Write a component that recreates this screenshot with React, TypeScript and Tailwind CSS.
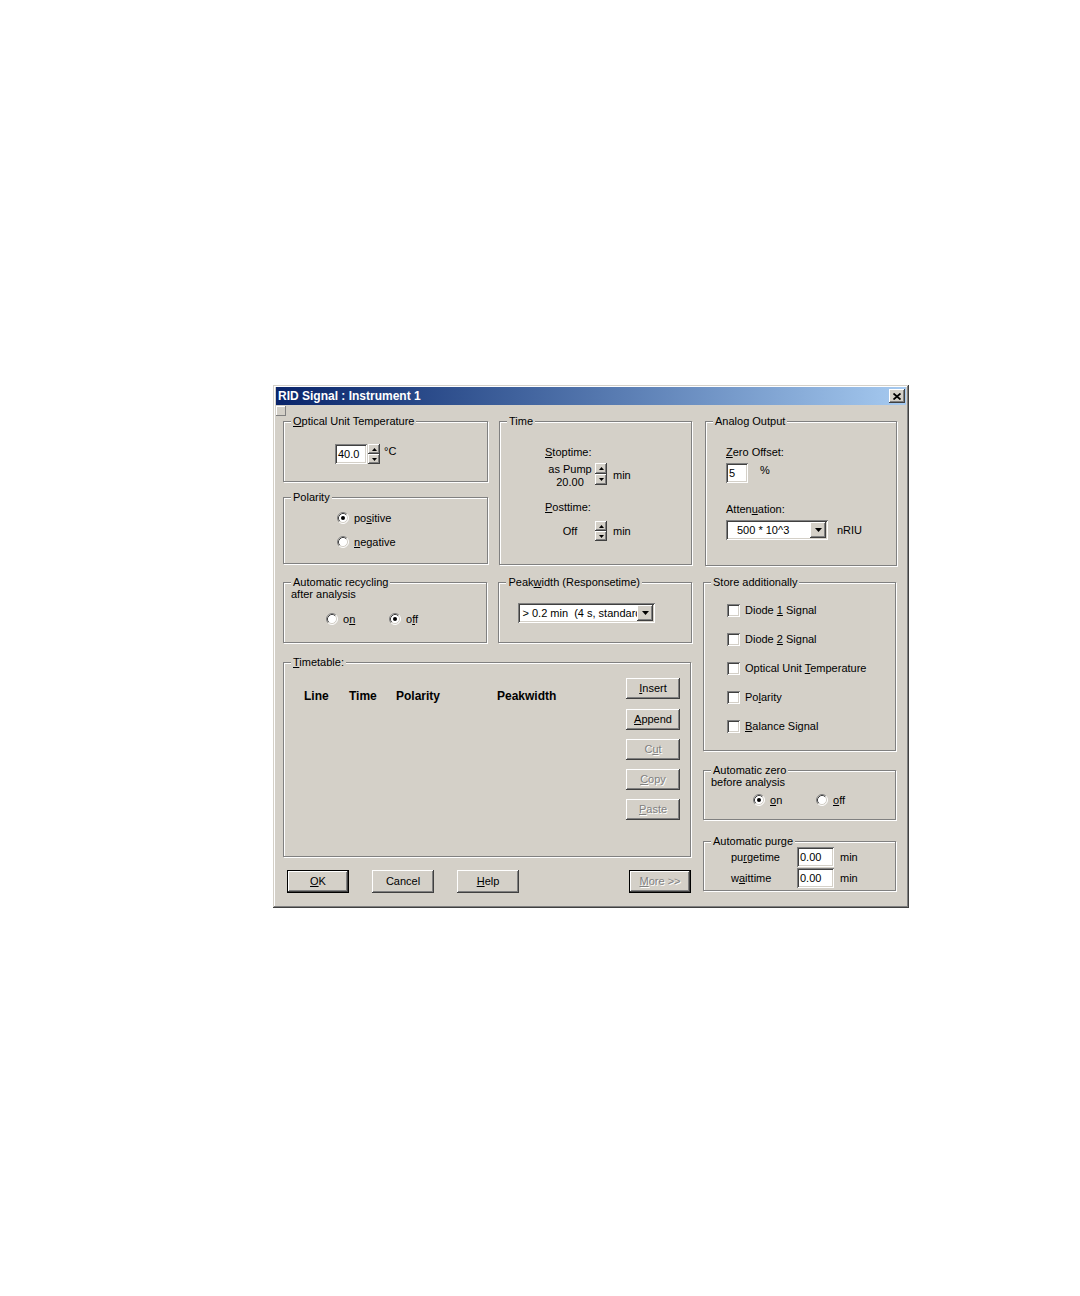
import React from 'react';

const FACE = 'bg-[#d4d0c8]';
const raised =
  'shadow-[inset_-1px_-1px_0_#404040,inset_1px_1px_0_#ffffff,inset_-2px_-2px_0_#808080,inset_2px_2px_0_#d4d0c8]';
const sunken =
  'shadow-[inset_1px_1px_0_#808080,inset_-1px_-1px_0_#ffffff,inset_2px_2px_0_#404040,inset_-2px_-2px_0_#d4d0c8]';
const disabledText = 'text-[#808080] [text-shadow:1px_1px_0_#ffffff]';

function Group({
  label,
  className = '',
  children,
}: {
  label: React.ReactNode;
  className?: string;
  children?: React.ReactNode;
}) {
  return (
    <fieldset className={`border border-[#808080] shadow-[1px_1px_0_#ffffff,inset_1px_1px_0_#ffffff] ${className}`}>
      <legend className={`ml-[7px] px-[2px] leading-[14px] ${FACE}`}>{label}</legend>
      {children}
    </fieldset>
  );
}

function Radio({ checked = false }: { checked?: boolean }) {
  return (
    <svg width="12" height="12" viewBox="0 0 12 12" className="shrink-0">
      <circle cx="6" cy="6" r="5" fill="#ffffff" />
      <path d="M2.11 9.89 A5.5 5.5 0 0 1 9.89 2.11" fill="none" stroke="#808080" strokeWidth="1" />
      <path d="M9.89 2.11 A5.5 5.5 0 0 1 2.11 9.89" fill="none" stroke="#ffffff" strokeWidth="1" />
      <path d="M2.82 9.18 A4.5 4.5 0 0 1 9.18 2.82" fill="none" stroke="#404040" strokeWidth="1" />
      <path d="M9.18 2.82 A4.5 4.5 0 0 1 2.82 9.18" fill="none" stroke="#d4d0c8" strokeWidth="1" />
      {checked && <circle cx="6" cy="6" r="2" fill="#000000" />}
    </svg>
  );
}

function RadioItem({ checked, children, className = '' }: { checked?: boolean; children: React.ReactNode; className?: string }) {
  return (
    <div className={`flex items-center h-[14px] gap-[5px] ${className}`}>
      <Radio checked={checked} />
      <span className="leading-[14px]">{children}</span>
    </div>
  );
}

function Check({ children }: { children: React.ReactNode }) {
  return (
    <div className="flex items-center h-[14px]">
      <div className={`w-[13px] h-[13px] bg-white ${sunken}`} />
      <span className="ml-[5px] leading-[14px]">{children}</span>
    </div>
  );
}

function Arrow({ dir }: { dir: 'up' | 'down' }) {
  return (
    <svg width="5" height="3" viewBox="0 0 5 3">
      {dir === 'up' ? <path d="M2.5 0 L5 3 L0 3 Z" fill="#000" /> : <path d="M0 0 L5 0 L2.5 3 Z" fill="#000" />}
    </svg>
  );
}

function Spin({ half, className = '' }: { half: number; className?: string }) {
  return (
    <div className={`flex flex-col w-[12px] ${className}`}>
      <div className={`flex items-center justify-center ${FACE} ${raised}`} style={{ height: half }}>
        <Arrow dir="up" />
      </div>
      <div className={`flex items-center justify-center ${FACE} ${raised}`} style={{ height: half }}>
        <Arrow dir="down" />
      </div>
    </div>
  );
}

function DropButton() {
  return (
    <div className={`w-[16px] h-[16px] shrink-0 flex items-center justify-center ${FACE} ${raised}`}>
      <svg width="7" height="4" viewBox="0 0 7 4">
        <path d="M0 0 L7 0 L3.5 4 Z" fill="#000" />
      </svg>
    </div>
  );
}

function Button({
  children,
  disabled = false,
  isDefault = false,
  className = '',
}: {
  children: React.ReactNode;
  disabled?: boolean;
  isDefault?: boolean;
  className?: string;
}) {
  return (
    <div
      className={`flex items-center justify-center ${FACE} ${isDefault ? 'border border-black' : ''} ${className} ${
        disabled ? disabledText : ''
      }`}
    >
      <div className={`w-full h-full flex items-center justify-center ${raised}`}>{children}</div>
    </div>
  );
}

function TitleBar() {
  return (
    <div className="h-[18px] flex items-center justify-between bg-linear-to-r from-[#0a246a] to-[#a6caf0]">
      <span className="pl-[2px] text-white font-bold text-[12px] leading-[18px]">RID Signal : Instrument 1</span>
      <div className={`w-[16px] h-[14px] mr-[1px] flex items-center justify-center ${FACE} ${raised}`}>
        <svg width="8" height="7" viewBox="0 0 8 7">
          <path d="M0.5 0.5 L7.5 6.5 M7.5 0.5 L0.5 6.5" stroke="#000" strokeWidth="1.8" />
        </svg>
      </div>
    </div>
  );
}

function LeftArea() {
  return (
    <div className="w-[409px] flex flex-col">
      {/* row 1 */}
      <div className="flex gap-[11px]">
        <div className="w-[205px] flex flex-col">
          <Group label={<><u>O</u>ptical Unit Temperature</>} className="h-[68px]">
            <div className="flex items-start pl-[51px] pt-[16px]">
              <div className={`w-[32px] h-[20px] bg-white ${sunken} pl-[3px] leading-[20px]`}>40.0</div>
              <Spin half={10} className="ml-[1px]" />
              <span className="ml-[4px] leading-[14px]">°C</span>
            </div>
          </Group>
          <Group label="Polarity" className="h-[74px] mt-[8px]">
            <div className="flex flex-col gap-[10px] pl-[53px] pt-[7px]">
              <RadioItem checked>
                po<u>s</u>itive
              </RadioItem>
              <RadioItem>
                <u>n</u>egative
              </RadioItem>
            </div>
          </Group>
        </div>
        <Group label="Time" className="w-[193px] h-[151px]">
          <div className="flex flex-col pl-[45px] pt-[17px]">
            <span className="leading-[14px]">
              <u>S</u>toptime:
            </span>
            <div className="flex items-start mt-[4px]">
              <div className="w-[50px] flex flex-col items-center leading-[13px]">
                <span>as Pump</span>
                <span>20.00</span>
              </div>
              <Spin half={11} />
              <span className="ml-[6px] mt-[5px] leading-[14px]">min</span>
            </div>
            <span className="leading-[14px] mt-[11px]">
              <u>P</u>osttime:
            </span>
            <div className="flex items-center mt-[7px]">
              <div className="w-[50px] text-center leading-[14px]">Off</div>
              <Spin half={10} />
              <span className="ml-[6px] leading-[14px]">min</span>
            </div>
          </div>
        </Group>
      </div>

      {/* row 2 */}
      <div className="flex gap-[11px] mt-[10px]">
        <Group label="Automatic recycling" className="w-[205px] h-[68px]">
          <div className="pl-[7px] leading-[13px] -mt-[1px]">after analysis</div>
          <div className="flex pl-[42px] mt-[11px]">
            <RadioItem className="w-[63px]">
              o<u>n</u>
            </RadioItem>
            <RadioItem checked>
              o<u>f</u>f
            </RadioItem>
          </div>
        </Group>
        <Group label={<>Peak<u>w</u>idth (Responsetime)</>} className="w-[194px] h-[68px]">
          <div className="pl-[19px] pt-[14px]">
            <div className={`w-[137px] h-[20px] bg-white ${sunken} flex items-center p-[2px]`}>
              <span className="flex-1 overflow-hidden whitespace-nowrap pl-[2px] leading-[16px]">
                &gt; 0.2 min&nbsp; (4 s, standard)
              </span>
              <DropButton />
            </div>
          </div>
        </Group>
      </div>

      {/* timetable */}
      <Group label={<><u>T</u>imetable:</>} className="w-[408px] h-[202px] mt-[12px]">
        <div className="flex justify-between pr-[10px]">
          <div className="flex pl-[20px] pt-[20px] font-bold text-[12px] leading-[14px]">
            <span className="w-[45px]">Line</span>
            <span className="w-[47px]">Time</span>
            <span className="w-[101px]">Polarity</span>
            <span>Peakwidth</span>
          </div>
          <div className="flex flex-col pt-[9px] w-[54px]">
            <Button className="h-[21px]">
              <u>I</u>nsert
            </Button>
            <Button className="h-[21px] mt-[10px]">
              <u>A</u>ppend
            </Button>
            <Button className="h-[21px] mt-[9px]" disabled>
              C<u>u</u>t
            </Button>
            <Button className="h-[21px] mt-[9px]" disabled>
              <u>C</u>opy
            </Button>
            <Button className="h-[21px] mt-[9px]" disabled>
              <u>P</u>aste
            </Button>
          </div>
        </div>
      </Group>

      {/* bottom buttons */}
      <div className="flex mt-[13px] pl-[4px] pr-[1px]">
        <Button isDefault className="w-[62px] h-[23px]">
          <u>O</u>K
        </Button>
        <Button className="w-[62px] h-[23px] ml-[23px]">Cancel</Button>
        <Button className="w-[62px] h-[23px] ml-[23px]">
          <u>H</u>elp
        </Button>
        <Button isDefault disabled className="w-[62px] h-[23px] ml-auto">
          <u>M</u>ore &gt;&gt;
        </Button>
      </div>
    </div>
  );
}

function RightColumn() {
  return (
    <div className="w-[194px] ml-[11px] flex flex-col">
      <Group label="Analog Output" className="w-[192px] h-[152px] ml-[2px]">
        <div className="flex flex-col pl-[20px] pt-[17px]">
          <span className="leading-[14px]">
            <u>Z</u>ero Offset:
          </span>
          <div className="flex items-start mt-[4px]">
            <div className={`w-[22px] h-[20px] bg-white ${sunken} pl-[3px] leading-[20px]`}>5</div>
            <span className="ml-[12px] leading-[14px]">%</span>
          </div>
          <span className="leading-[14px] mt-[19px]">
            Atten<u>u</u>ation:
          </span>
          <div className="flex items-center mt-[4px]">
            <div className={`w-[102px] h-[20px] bg-white ${sunken} flex items-center p-[2px]`}>
              <span className="flex-1 pl-[9px] leading-[16px] whitespace-nowrap">500 * 10^3</span>
              <DropButton />
            </div>
            <span className="ml-[9px] leading-[14px]">nRIU</span>
          </div>
        </div>
      </Group>

      <Group label="Store additionally" className="w-[193px] h-[176px] mt-[9px]">
        <div className="flex flex-col gap-[15px] pl-[23px] pt-[14px]">
          <Check>
            Diode <u>1</u> Signal
          </Check>
          <Check>
            Diode <u>2</u> Signal
          </Check>
          <Check>
            Optical Unit <u>T</u>emperature
          </Check>
          <Check>
            Po<u>l</u>arity
          </Check>
          <Check>
            <u>B</u>alance Signal
          </Check>
        </div>
      </Group>

      <Group label="Automatic zero" className="w-[193px] h-[57px] mt-[12px]">
        <div className="pl-[7px] leading-[13px] -mt-[1px]">before analysis</div>
        <div className="flex pl-[49px] mt-[4px]">
          <RadioItem checked className="w-[63px]">
            <u>o</u>n
          </RadioItem>
          <RadioItem>
            <u>o</u>ff
          </RadioItem>
        </div>
      </Group>

      <Group label="Automatic purge" className="w-[193px] h-[57px] mt-[14px]">
        <div className="flex flex-col gap-[1px] -mt-[1px]">
          <div className="flex items-center pl-[27px]">
            <span className="w-[66px] leading-[14px]">
              pu<u>r</u>getime
            </span>
            <div className={`w-[37px] h-[20px] bg-white ${sunken} pl-[3px] leading-[20px]`}>0.00</div>
            <span className="ml-[6px] leading-[14px]">min</span>
          </div>
          <div className="flex items-center pl-[27px]">
            <span className="w-[66px] leading-[14px]">
              w<u>a</u>ittime
            </span>
            <div className={`w-[37px] h-[20px] bg-white ${sunken} pl-[3px] leading-[20px]`}>0.00</div>
            <span className="ml-[6px] leading-[14px]">min</span>
          </div>
        </div>
      </Group>
    </div>
  );
}

export default function App() {
  return (
    <div className="min-h-screen bg-white pt-[385px] pl-[273px] font-['Liberation_Sans',Arial,sans-serif] text-[11px] text-black">
      <div
        className={`w-[636px] h-[523px] ${FACE} pt-[2px] px-[3px] shadow-[inset_-1px_-1px_0_#404040,inset_1px_1px_0_#d4d0c8,inset_-2px_-2px_0_#808080,inset_2px_2px_0_#ffffff]`}
      >
        <TitleBar />
        <div className="relative flex pt-[9px] pl-[7px]">
          {/* small system square in the corner */}
          <div className={`absolute left-0 top-[1px] w-[10px] h-[10px] ${FACE} shadow-[inset_-1px_-1px_0_#808080,inset_1px_1px_0_#ffffff]`} />
          <LeftArea />
          <RightColumn />
        </div>
      </div>
    </div>
  );
}
